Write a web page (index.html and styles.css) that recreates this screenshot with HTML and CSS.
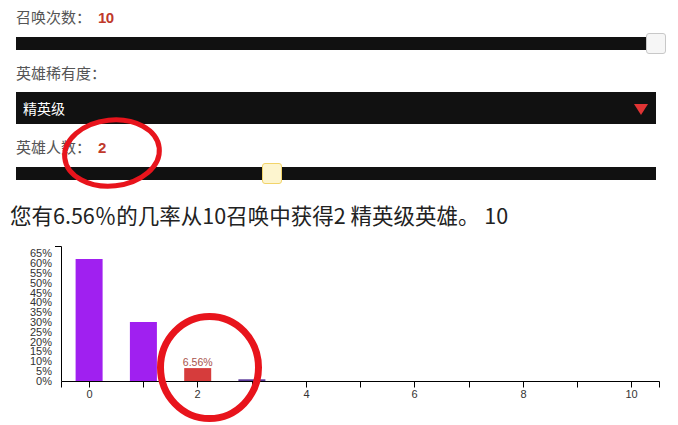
FILE: index.html
```html
<!DOCTYPE html>
<html>
<head>
<meta charset="utf-8">
<link rel="stylesheet" href="styles.css">
</head>
<body>
<div class="page">
  <div class="form">
    <div class="label l1">召唤次数：<span class="val">10</span></div>
    <div class="slider s1"><div class="track"></div><div class="thumb t-max"></div></div>
    <div class="label l2">英雄稀有度：</div>
    <div class="select"><span class="sel-text">精英级</span><span class="arrow"></span></div>
    <div class="label l3">英雄人数：<span class="val">2</span></div>
    <div class="slider s2"><div class="track"></div><div class="thumb t-hl" style="left:40%"></div></div>
  </div>
  <div class="result">您有6.56％的几率从10召唤中获得2 精英级英雄。 10</div>
  <svg class="chart" width="678" height="190" viewBox="0 0 678 190">
    <g class="bars">
      <rect x="75.6" y="25" width="27" height="122" fill="#a020f0"/>
      <rect x="129.9" y="88" width="27" height="59" fill="#a020f0"/>
      <rect x="184.2" y="134.1" width="27" height="12.9" fill="#d63c3c"/>
      <rect x="238.4" y="145.3" width="27" height="1.7" fill="#5b3a9a"/>
    </g>
    <text class="barlabel" x="197.7" y="132" text-anchor="middle">6.56%</text>
    <g class="yaxis">
      <path d="M55,12.5H61.5V147.5" fill="none" stroke="#000"/>
      <text x="52" y="150.8">0%</text>
      <text x="52" y="141">5%</text>
      <text x="52" y="131.2">10%</text>
      <text x="52" y="121.4">15%</text>
      <text x="52" y="111.6">20%</text>
      <text x="52" y="101.8">25%</text>
      <text x="52" y="92">30%</text>
      <text x="52" y="82.2">35%</text>
      <text x="52" y="72.4">40%</text>
      <text x="52" y="62.6">45%</text>
      <text x="52" y="52.8">50%</text>
      <text x="52" y="43">55%</text>
      <text x="52" y="33.2">60%</text>
      <text x="52" y="23.4">65%</text>
    </g>
    <g class="xaxis">
      <path d="M61.5,153.5V147.5H659.5V153.5" fill="none" stroke="#000"/>
      <path d="M89.5,147.5v6M143.5,147.5v6M197.5,147.5v6M252.5,147.5v6M306.5,147.5v6M360.5,147.5v6M414.5,147.5v6M469.5,147.5v6M523.5,147.5v6M577.5,147.5v6M631.5,147.5v6" stroke="#000"/>
      <text x="89.5" y="164">0</text>
      <text x="197.5" y="164">2</text>
      <text x="306.5" y="164">4</text>
      <text x="414.5" y="164">6</text>
      <text x="523.5" y="164">8</text>
      <text x="631.5" y="164">10</text>
    </g>
  </svg>
</div>
<svg class="annot" width="678" height="425" viewBox="0 0 678 425">
  <ellipse cx="112" cy="153" rx="47.5" ry="33" transform="rotate(-6 112 153)" fill="none" stroke="#e8141c" stroke-width="5"/>
  <ellipse cx="209.5" cy="367.5" rx="49" ry="51" fill="none" stroke="#e8141c" stroke-width="7"/>
</svg>
</body>
</html>
```
FILE: styles.css
```css
html, body {
  margin: 0;
  padding: 0;
  background: #fff;
}
.page {
  position: relative;
  width: 678px;
  height: 425px;
  overflow: hidden;
}
.form {
  padding: 0 22px 0 16px;
  display: flex;
  flex-direction: column;
}
.label {
  font-family: "Noto Sans CJK SC", "Noto Sans", sans-serif;
  font-size: 15px;
  line-height: 20px;
  height: 20px;
  color: #555;
}
.l1 { margin-top: 7px; }
.l2 { margin-top: 13px; }
.l3 { margin-top: 13px; }
.val {
  font-family: "Liberation Sans", Arial, sans-serif;
  font-weight: bold;
  font-size: 15px;
  letter-spacing: -0.5px;
  color: #c0392b;
  margin-left: 7px;
}
.slider {
  position: relative;
  height: 13px;
}
.s1 { margin-top: 10px; }
.s2 { margin-top: 10px; }
.track {
  height: 13px;
  background: #111;
}
.thumb {
  position: absolute;
  top: -4px;
  width: 18px;
  height: 19px;
  margin-left: -10px;
  border-radius: 3px;
}
.t-max {
  left: 100%;
  background: #f6f6f6;
  border: 1px solid #c8c8c8;
}
.t-hl {
  background: #fdf5cf;
  border: 1px solid #f2d46a;
}
.select {
  margin-top: 9px;
  height: 32px;
  background: #111;
  display: flex;
  align-items: center;
  justify-content: space-between;
  padding: 0 8px 0 7px;
}
.sel-text {
  font-family: "Noto Sans CJK SC", sans-serif;
  font-size: 14px;
  color: #fff;
}
.arrow {
  width: 0;
  height: 0;
  border-left: 7px solid transparent;
  border-right: 7px solid transparent;
  border-top: 11px solid #e03434;
  margin-top: 2px;
}
.result {
  margin-top: 21px;
  padding-left: 10px;
  font-family: "Noto Sans CJK SC", sans-serif;
  font-size: 21.5px;
  line-height: 28px;
  color: #222;
  letter-spacing: 0;
}
.chart {
  display: block;
  margin-top: 5px;
}
.chart text {
  font-family: "Liberation Sans", Arial, sans-serif;
  font-size: 11px;
  fill: #333;
}
.yaxis text { text-anchor: end; }
.xaxis text { text-anchor: middle; }
.chart .barlabel { fill: #a8524c; font-size: 10.5px; }
.annot {
  position: absolute;
  left: 0;
  top: 0;
  pointer-events: none;
}
```
